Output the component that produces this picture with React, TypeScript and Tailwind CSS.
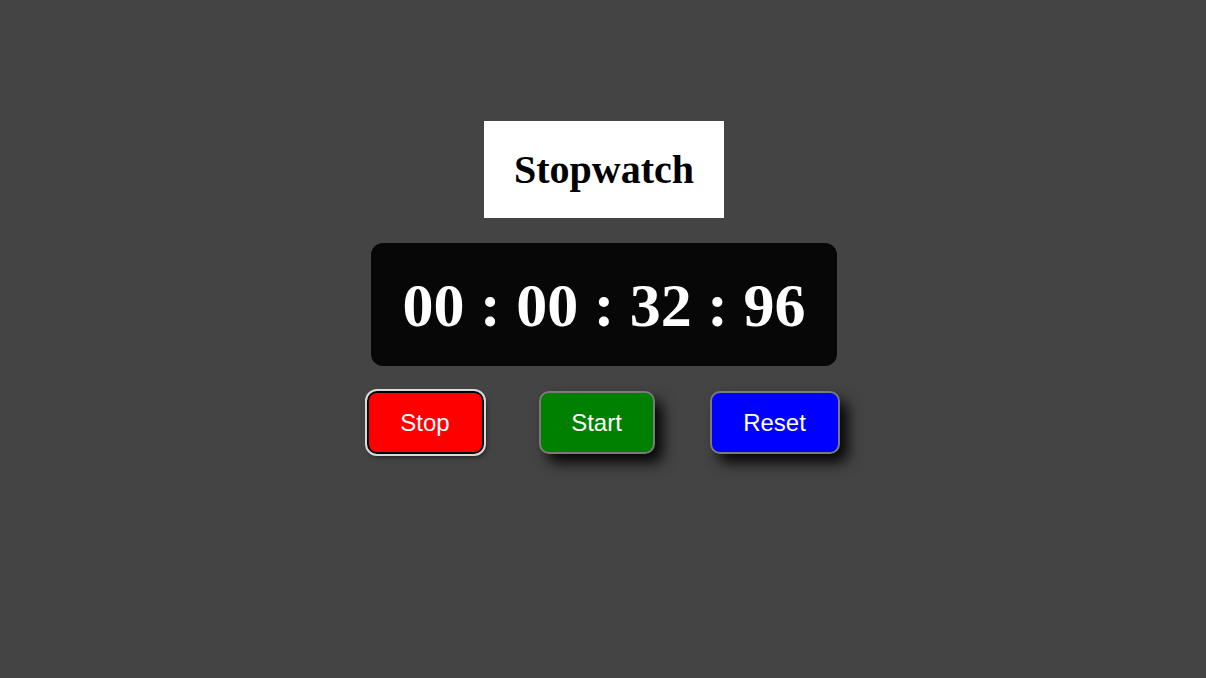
export default function App() {
  return (
    <div className="min-h-screen w-full bg-[#444444] flex flex-col items-center pt-[121px]">
      {/* Title */}
      <div className="ml-[2px] bg-white px-[30px] py-[25px]">
        <h1 className="text-[40px] leading-[47px] font-bold text-black font-['Liberation_Serif',serif]">
          Stopwatch
        </h1>
      </div>

      {/* Time display */}
      <div className="mt-[25px] ml-[2px] flex h-[123px] w-[466px] items-center justify-center rounded-xl bg-[#070707]">
        <span className="block text-[62px] leading-[72px] font-bold text-white font-['Liberation_Serif',serif]">
          00 : 00 : 32 : 96
        </span>
      </div>

      {/* Controls */}
      <div className="mt-[25px] flex items-center gap-[55px] font-['Liberation_Sans',Arial,sans-serif]">
        <button className="h-[63px] w-[117px] rounded-[10px] border-2 border-black bg-[#ff0000] text-2xl text-white outline-2 outline-[#d9d9d9] shadow-[2px_3px_5px_rgba(0,0,0,0.6)]">
          Stop
        </button>
        <button className="h-[63px] w-[116px] rounded-[10px] border-2 border-[#7a7a7a] bg-[#008000] text-2xl text-white shadow-[8px_9px_14px_rgba(0,0,0,0.9)]">
          Start
        </button>
        <button className="h-[63px] w-[130px] rounded-[10px] border-2 border-[#7a7a7a] bg-[#0000ff] text-2xl text-white shadow-[8px_9px_14px_rgba(0,0,0,0.9)]">
          Reset
        </button>
      </div>
    </div>
  );
}
